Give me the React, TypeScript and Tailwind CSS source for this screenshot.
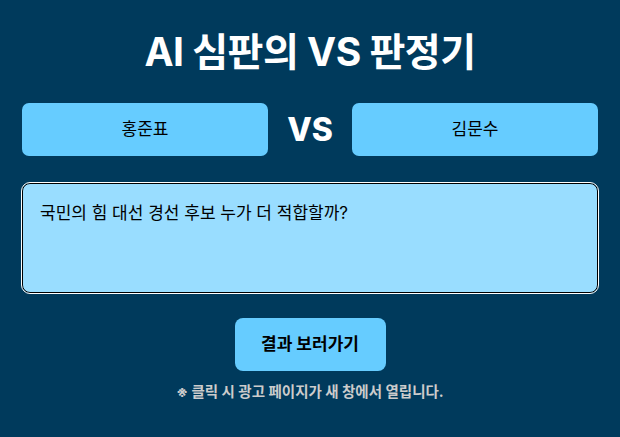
import { useState } from 'react';

// 메인 화면: AI 심판 판정기
function App() {
  const [question, setQuestion] = useState('국민의 힘 대선 경선 후보 누가 더 적합할까?');

  return (
    <div
      className="min-h-[437px] w-full bg-[#003a5c] px-[22px] pt-[27px] text-center"
      style={{ fontFamily: 'Inter, "Noto Sans CJK KR", sans-serif' }}
    >
      <h1 className="text-[39px] font-bold leading-[50px] tracking-[-0.5px] text-white">
        AI 심판의 VS 판정기
      </h1>

      <div className="mt-[26px] flex items-center justify-between">
        <button className="h-[53px] w-[246px] rounded-[7px] bg-[#66ccff] text-[17px] text-black">
          홍준표
        </button>
        <span className="text-[32px] font-extrabold text-white">VS</span>
        <button className="h-[53px] w-[246px] rounded-[7px] bg-[#66ccff] text-[17px] text-black">
          김문수
        </button>
      </div>

      <textarea
        value={question}
        onChange={(e) => setQuestion(e.target.value)}
        className="mt-[27px] block h-[110px] w-full resize-none rounded-[8px] border border-black bg-[#99ddff] px-[17px] py-[17px] text-[17px] leading-[24px] text-black outline outline-1 outline-white"
      />

      <button className="mx-auto mt-[25px] block h-[53px] w-[151px] rounded-[8px] bg-[#66ccff] text-[17px] font-bold text-black">
        결과 보러가기
      </button>
      <p className="mt-[10px] text-[14.5px] font-bold text-[#cccccc]">
        ※ 클릭 시 광고 페이지가 새 창에서 열립니다.
      </p>
    </div>
  );
}

export default App;
